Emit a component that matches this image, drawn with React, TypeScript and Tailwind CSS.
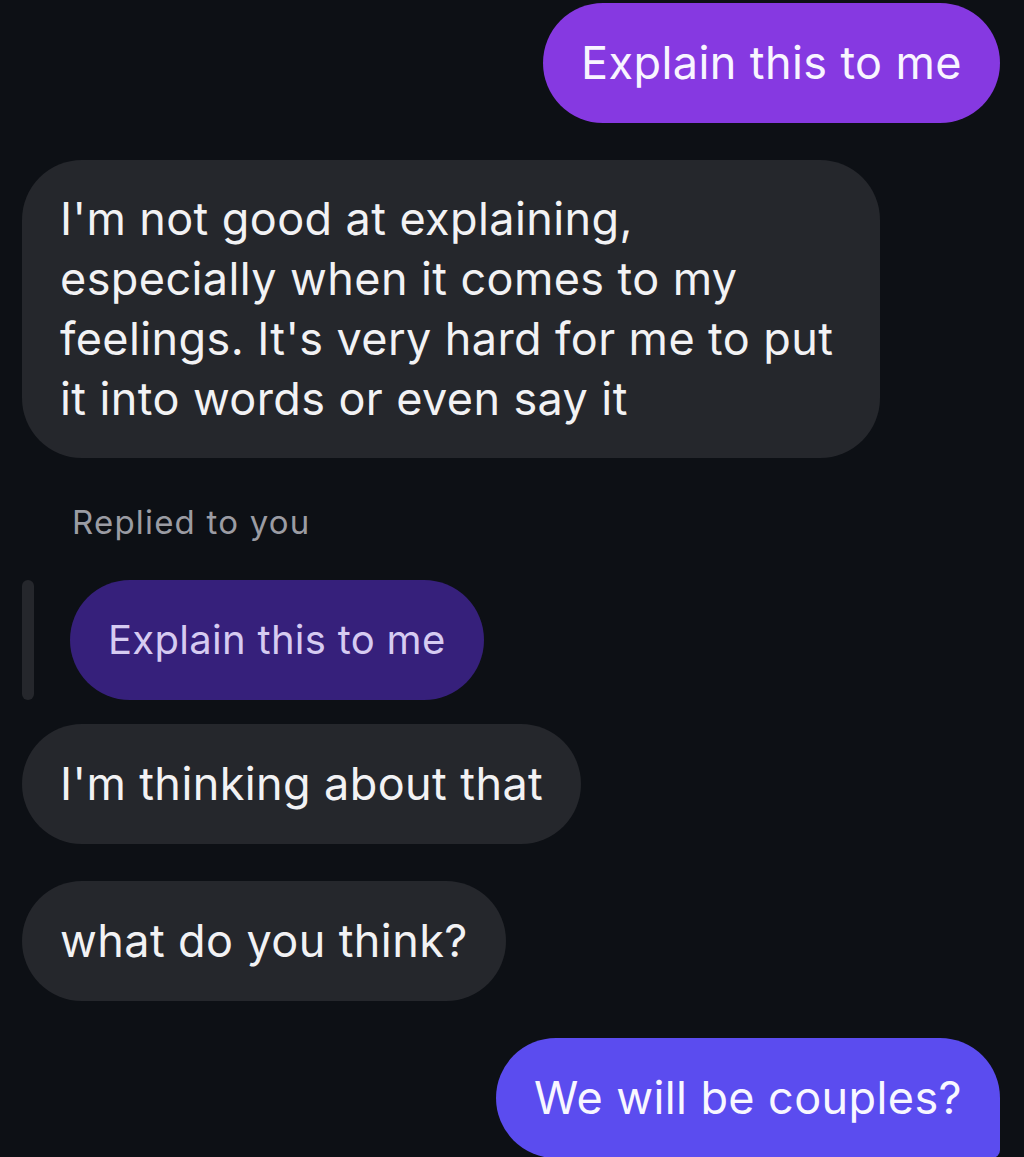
import React from 'react'

const font = { fontFamily: 'Inter, "Noto Sans", "Liberation Sans", sans-serif' }

function Bubble({ children, className }: { children: React.ReactNode; className: string }) {
  return (
    <div className={`rounded-[60px] px-[38px] text-[45px] leading-[60px] tracking-[0.4px] ${className}`}>
      {children}
    </div>
  )
}

export default function App() {
  return (
    <div style={font} className="min-h-[1157px] w-[1024px] overflow-hidden bg-[#0d1015] pl-[22px] pr-[24px] pt-[3px]">
      <div className="flex flex-col">
        {/* sent */}
        <div className="flex justify-end">
          <Bubble className="bg-[#8639e1] py-[30px] text-[#f8f5ff]">Explain this to me</Bubble>
        </div>

        {/* received, long */}
        <div className="mt-[37px] flex">
          <Bubble className="w-[858px] bg-[#25272c] py-[29px] text-[#f2f2f4]">
            I'm not good at explaining,
            <br />
            especially when it comes to my
            <br />
            feelings. It's very hard for me to put
            <br />
            it into words or even say it
          </Bubble>
        </div>

        {/* reply header */}
        <div className="mt-[44px] pl-[50px] text-[33px] leading-[40px] tracking-[1.2px] text-[#9b9ca3]">
          Replied to you
        </div>

        <div className="mt-[38px] flex items-stretch">
          <div className="w-[12px] rounded-full bg-[#25272c]" />
          <div className="ml-[36px]">
            <div className="rounded-[60px] bg-[#36207b] px-[38px] py-[30px] text-[40px] leading-[60px] tracking-[0.3px] text-[#d6cbf1]">
              Explain this to me
            </div>
          </div>
        </div>

        <div className="mt-[24px] flex">
          <Bubble className="bg-[#25272c] py-[30px] text-[#f2f2f4]">I'm thinking about that</Bubble>
        </div>

        <div className="mt-[37px] flex">
          <Bubble className="bg-[#25272c] py-[30px] text-[#f2f2f4]">what do you think?</Bubble>
        </div>

        <div className="mt-[37px] flex justify-end">
          <div className="rounded-[60px] rounded-br-[8px] bg-[#5b4cef] px-[38px] py-[30px] text-[45px] leading-[60px] tracking-[0.4px] text-[#f8f7ff]">
            We will be couples?
          </div>
        </div>
      </div>
    </div>
  )
}
